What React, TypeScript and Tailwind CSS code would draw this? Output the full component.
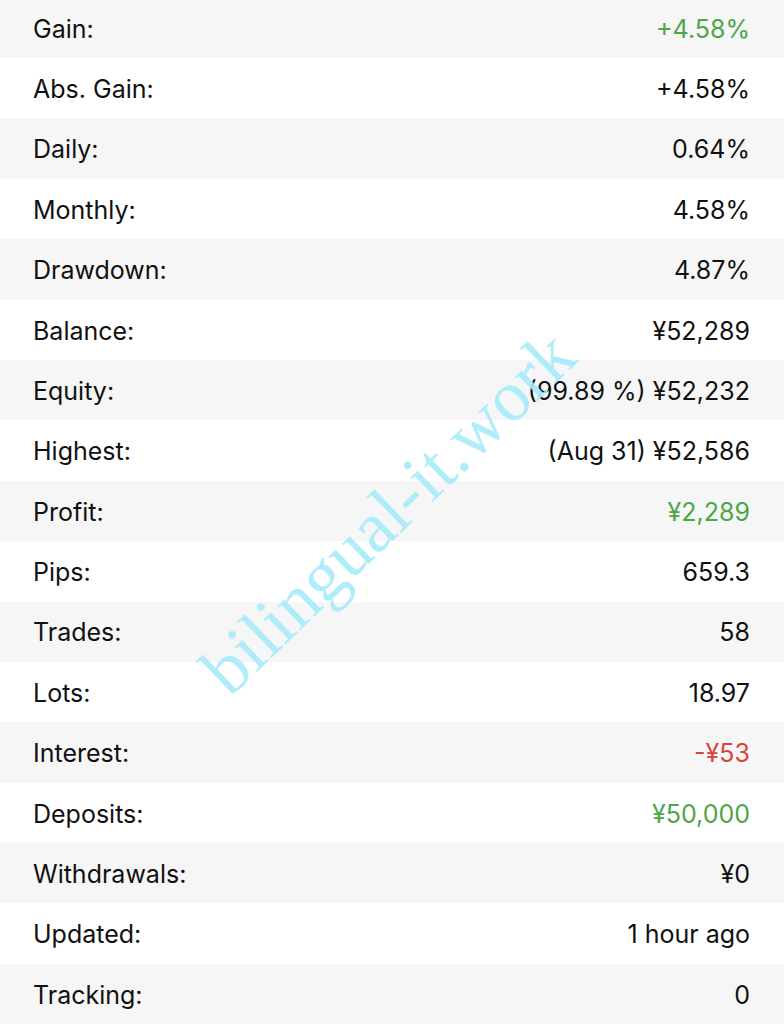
import React from 'react';

type Row = { label: string; value: string; tone?: 'green' | 'red' };

const rows: Row[] = [
  { label: 'Gain:', value: '+4.58%', tone: 'green' },
  { label: 'Abs. Gain:', value: '+4.58%' },
  { label: 'Daily:', value: '0.64%' },
  { label: 'Monthly:', value: '4.58%' },
  { label: 'Drawdown:', value: '4.87%' },
  { label: 'Balance:', value: '¥52,289' },
  { label: 'Equity:', value: '(99.89 %) ¥52,232' },
  { label: 'Highest:', value: '(Aug 31) ¥52,586' },
  { label: 'Profit:', value: '¥2,289', tone: 'green' },
  { label: 'Pips:', value: '659.3' },
  { label: 'Trades:', value: '58' },
  { label: 'Lots:', value: '18.97' },
  { label: 'Interest:', value: '-¥53', tone: 'red' },
  { label: 'Deposits:', value: '¥50,000', tone: 'green' },
  { label: 'Withdrawals:', value: '¥0' },
  { label: 'Updated:', value: '1 hour ago' },
  { label: 'Tracking:', value: '0' },
];

const toneClass = (tone?: 'green' | 'red') => {
  if (tone === 'green') return 'text-[#4ca64a]';
  if (tone === 'red') return 'text-[#d8453b]';
  return 'text-[#111111]';
};

export default function App() {
  return (
    <div className="relative h-[1024px] w-[784px] overflow-hidden bg-white font-['Inter',sans-serif]">
      <div className="-mt-[2.4px] flex flex-col">
        {rows.map((r, i) => (
          <div
            key={r.label}
            className={`flex h-[60.4px] items-center justify-between pl-[33px] pr-[34px] pt-[3px] text-[25px] ${
              i % 2 === 0 ? 'bg-[#f6f6f6]' : 'bg-white'
            }`}
          >
            <span className="text-[#111111]">{r.label}</span>
            <span className={toneClass(r.tone)}>{r.value}</span>
          </div>
        ))}
      </div>

      {/* watermark */}
      <div className="pointer-events-none absolute left-[388px] top-[512px] -translate-x-1/2 -translate-y-1/2 -rotate-[44deg] whitespace-nowrap font-['Liberation_Serif',serif] text-[72px] text-[#a8ecfb] opacity-90">
        bilingual-it.work
      </div>
    </div>
  );
}
